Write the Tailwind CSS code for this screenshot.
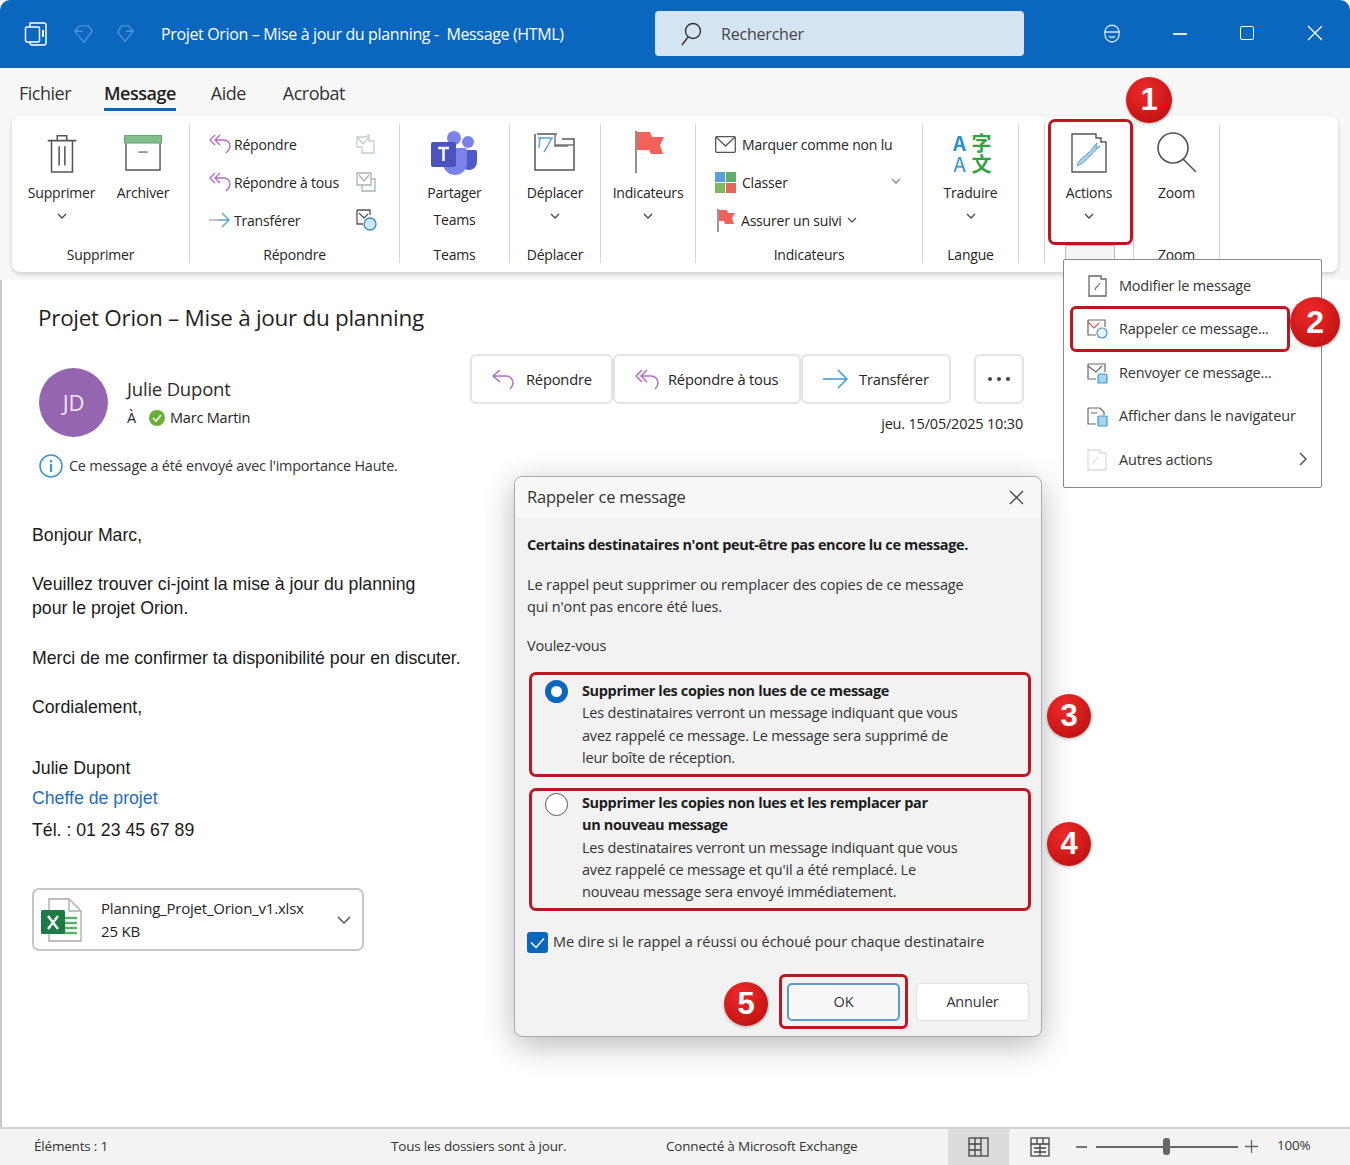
<!DOCTYPE html>
<html lang="fr">
<head>
<meta charset="UTF-8">
<title>Projet Orion – Mise à jour du planning - Message (HTML)</title>
<script src="https://cdn.jsdelivr.net/npm/@tailwindcss/browser@4"></script>
</head>
<body class="bg-white">
<div class="relative w-[1350px] h-[1165px] overflow-hidden flex flex-col font-['Open_Sans',sans-serif] text-[#242424] text-[14px] tracking-[-0.2px] bg-white">

  <!-- barre de titre -->
  <div class="h-[68px] shrink-0 bg-[#0a67bd] rounded-t-[10px] flex items-center text-white relative">
    <svg class="ml-[24px] w-[26px] h-[26px]" viewBox="0 0 26 26" fill="none" stroke="#fff" stroke-width="1.5"><rect x="1.5" y="6" width="14" height="15" rx="1.5"/><path d="M6 6V2h14a2 2 0 0 1 2 2v18a2 2 0 0 1-2 2H8a2 2 0 0 1-2-2v-1"/><path d="M19 9v7" stroke-width="2"/></svg>
    <svg class="ml-[24px] w-[20px] h-[20px]" viewBox="0 0 22 22" fill="none" stroke="#4e93d2" stroke-width="1.5"><path d="M1 8 6 2h10l4 6-9 12zM1 8h9"/></svg>
    <svg class="ml-[21px] w-[20px] h-[20px]" viewBox="0 0 22 22" fill="none" stroke="#4e93d2" stroke-width="1.5"><path d="M20 8 15 2H7L3 9l8 10zM20 8h-8"/></svg>
    <span class="ml-[26px] text-[16px] whitespace-pre tracking-[-0.35px]">Projet Orion – Mise à jour du planning -  Message (HTML)</span>
    <div class="absolute left-[655px] top-[11px] w-[369px] h-[45px] rounded-[4px] bg-[#d5e4f2] flex items-center text-[#444] text-[16px]">
      <svg class="ml-[25px] w-[22px] h-[24px]" viewBox="0 0 22 24" fill="none" stroke="#333" stroke-width="1.4"><circle cx="13" cy="9" r="7.5"/><path d="m8 15-6 8"/></svg>
      <span class="ml-[19px]">Rechercher</span>
    </div>
    <svg class="absolute left-[1103px] top-[24px] w-[18px] h-[20px]" viewBox="0 0 18 20" fill="none" stroke="#cfe2f5" stroke-width="1.3"><path d="M2 8c0-9 14-9 14 0v3c0 3-3 7-7 7s-7-4-7-7z"/><path d="M1 8h16M6 12c2 2 4 2 6 0"/></svg>
    <div class="absolute left-[1173px] top-[33px] w-[14px] h-[1.5px] bg-[#dbe9f6]"></div>
    <div class="absolute left-[1240px] top-[26px] w-[14px] h-[14px] border-[1.5px] border-white rounded-[2px]"></div>
    <svg class="absolute left-[1307px] top-[25px] w-[16px] h-[16px]" viewBox="0 0 16 16" stroke="#fff" stroke-width="1.4"><path d="m1 1 14 14M15 1 1 15"/></svg>
  </div>

  <!-- onglets -->
  <div class="h-[48px] shrink-0 bg-[#f8f8f8] flex items-start pt-[12px] pl-[19px] text-[18px] text-[#333] tracking-[-0.5px]">
    <span>Fichier</span>
    <span class="ml-[33px] h-[31px] border-b-[3px] border-[#0a67bd] font-semibold text-[#222]">Message</span>
    <span class="ml-[35px]">Aide</span>
    <span class="ml-[37px]">Acrobat</span>
  </div>

  <!-- ruban -->
  <div class="h-[164px] shrink-0 bg-[#f8f8f8] relative">
    <div class="absolute left-[12px] top-0 w-[1326px] h-[156px] bg-white rounded-[8px] shadow-[0_2px_5px_rgba(0,0,0,0.18)] flex pt-[8px] items-start">

      <!-- Supprimer -->
      <div class="w-[178px] h-[139px] border-r border-[#d4d4d4] flex flex-col">
        <div class="flex-1 flex">
          <div class="w-[99px] flex flex-col items-center">
            <svg class="mt-[9px] w-[32px] h-[40px]" viewBox="0 0 32 42" fill="none" stroke="#555" stroke-width="1.6"><path d="M1 8h30M11 8V3h10v5M5 8v33h22V8M13 14v20M19 14v20"/></svg>
            <span class="mt-[8px] leading-[24px]">Supprimer</span>
            <svg class="mt-[8px] w-[10px] h-[6px]" viewBox="0 0 10 6" fill="none" stroke="#444" stroke-width="1.3"><path d="m1 1 4 4 4-4"/></svg>
          </div>
          <div class="w-[64px] flex flex-col items-center">
            <svg class="mt-[11px] w-[40px] h-[36px]" viewBox="0 0 40 38" fill="none"><rect x="0.5" y="0.5" width="39" height="8" fill="#82bd8d" stroke="#6a9f76"/><path d="M2 9v28h36V9" stroke="#555" stroke-width="1.5"/><path d="M15 18h10" stroke="#777" stroke-width="1.5"/></svg>
            <span class="mt-[10px] leading-[24px]">Archiver</span>
          </div>
        </div>
        <div class="h-[16px] leading-[16px] text-center">Supprimer</div>
      </div>

      <!-- Répondre -->
      <div class="w-[210px] h-[139px] border-r border-[#d4d4d4] flex flex-col">
        <div class="flex-1 flex flex-col pl-[18px] pr-[22px] pt-[1px]">
          <div class="h-[38px] flex items-center">
            <svg class="w-[25px] h-[22px]" viewBox="0 0 25 22" fill="none" stroke="#b56cc4" stroke-width="1.4"><path d="M7 2 2 7l5 5M12 2 7 7l5 5M7 7h9a6 6 0 0 1 6 6c0 3-2 5-4 7"/></svg>
            <span class="ml-[1px] flex-1">Répondre</span>
            <svg class="w-[22px] h-[22px]" viewBox="0 0 22 22" fill="none" stroke="#c3cdd3" stroke-width="1.3"><path d="M2 4h9l3-2v6h5v12H7v-6H2z"/><path d="m2 4 6 7 6-7"/></svg>
          </div>
          <div class="h-[38px] flex items-center">
            <svg class="w-[25px] h-[22px]" viewBox="0 0 25 22" fill="none" stroke="#b56cc4" stroke-width="1.4"><path d="M7 2 2 7l5 5M12 2 7 7l5 5M7 7h9a6 6 0 0 1 6 6c0 3-2 5-4 7"/></svg>
            <span class="ml-[1px] flex-1">Répondre à tous</span>
            <svg class="w-[22px] h-[22px]" viewBox="0 0 22 22" fill="none" stroke="#a8b2b8" stroke-width="1.3"><path d="M2 2h14v12H2zM7 14v6h13V8h-4"/><path d="m4 4 5 6 5-6"/></svg>
          </div>
          <div class="h-[38px] flex items-center">
            <svg class="w-[25px] h-[22px]" viewBox="0 0 25 22" fill="none" stroke-width="1.4"><path d="M1 11h9" stroke="#c39ac5"/><path d="M10 11h11M14 4l7 7-7 7" stroke="#5aa3cf"/></svg>
            <span class="ml-[1px] flex-1">Transférer</span>
            <svg class="w-[22px] h-[22px]" viewBox="0 0 22 22" fill="none" stroke="#555" stroke-width="1.3"><path d="M2 1h13v5M2 1v14h6"/><path d="m4 4 5 5 4-4"/><circle cx="15" cy="15" r="6" fill="#cfe6f5" stroke="#3e8cc4"/></svg>
          </div>
        </div>
        <div class="h-[16px] leading-[16px] text-center">Répondre</div>
      </div>

      <!-- Teams -->
      <div class="w-[110px] h-[139px] border-r border-[#d4d4d4] flex flex-col items-center">
        <svg class="mt-[7px] w-[46px] h-[44px] -translate-x-[1px]" viewBox="0 0 46 44"><circle cx="37" cy="11" r="6" fill="#7b83eb"/><path d="M30 19h14a2 2 0 0 1 2 2v10a8 8 0 0 1-16 0z" fill="#5059c9"/><circle cx="23" cy="7" r="7" fill="#7b83eb"/><path d="M12 17h22a2 2 0 0 1 2 2v13a12 12 0 0 1-24 0z" fill="#7b83eb"/><rect x="0" y="11" width="25" height="25" rx="2" fill="#4b53bc"/><path d="M7 17h11M12.500 17v13" stroke="#fff" stroke-width="2.500"/></svg>
        <span class="mt-[6px] leading-[24px]">Partager</span>
        <span class="mt-[3px] leading-[24px]">Teams</span>
        <span class="mt-auto h-[16px] leading-[16px]">Teams</span>
      </div>

      <!-- Déplacer -->
      <div class="w-[91px] h-[139px] border-r border-[#d4d4d4] flex flex-col items-center">
        <svg class="mt-[8px] w-[42px] h-[40px]" viewBox="0 0 42 40" fill="none" stroke="#555" stroke-width="1.5"><path d="M3 2h20M28 7h12v31H1V2"/><path d="M4 6h14l-8 14M6 6l-1 10" stroke="#5aa3cf"/><path d="M21 2v11h19M20 14h14" stroke="#777"/></svg>
        <span class="mt-[9px] leading-[24px]">Déplacer</span>
        <svg class="mt-[8px] w-[10px] h-[6px]" viewBox="0 0 10 6" fill="none" stroke="#444" stroke-width="1.3"><path d="m1 1 4 4 4-4"/></svg>
        <span class="mt-auto h-[16px] leading-[16px]">Déplacer</span>
      </div>

      <!-- Indicateurs gros bouton -->
      <div class="w-[95px] h-[139px] border-r border-[#d4d4d4] flex flex-col items-center">
        <svg class="mt-[7px] w-[30px] h-[42px] translate-x-[2px]" viewBox="0 0 30 42"><path d="M1 0v42" stroke="#555" stroke-width="1.3"/><path d="M2 1h13l2 5h12l-4 8 3 9H16l-2-4H2z" fill="#f0625a"/></svg>
        <span class="mt-[8px] leading-[24px]">Indicateurs</span>
        <svg class="mt-[8px] w-[10px] h-[6px]" viewBox="0 0 10 6" fill="none" stroke="#444" stroke-width="1.3"><path d="m1 1 4 4 4-4"/></svg>
      </div>

      <!-- Indicateurs -->
      <div class="w-[227px] h-[139px] border-r border-[#d4d4d4] flex flex-col">
        <div class="flex-1 flex flex-col pl-[19px] pt-[1px]">
          <div class="h-[38px] flex items-center">
            <svg class="w-[21px] h-[17px]" viewBox="0 0 21 17" fill="none" stroke="#555" stroke-width="1.3"><rect x="0.7" y="0.7" width="19.6" height="15.6" rx="1"/><path d="m1 1 9.500 9L20 1"/></svg>
            <span class="ml-[6px]">Marquer comme non lu</span>
          </div>
          <div class="h-[38px] flex items-center">
            <svg class="w-[21px] h-[21px]" viewBox="0 0 21 21"><rect width="10" height="10" fill="#5a9fd8"/><rect x="11" width="10" height="10" fill="#5fae6a"/><rect y="11" width="10" height="10" fill="#7db85e"/><rect x="11" y="11" width="10" height="10" fill="#e2685a"/></svg>
            <span class="ml-[6px] flex-1">Classer</span>
            <svg class="mr-[21px] mb-[3px] w-[10px] h-[6px]" viewBox="0 0 10 6" fill="none" stroke="#888" stroke-width="1.3"><path d="m1 1 4 4 4-4"/></svg>
          </div>
          <div class="h-[38px] flex items-center">
            <svg class="ml-[2px] w-[19px] h-[23px]" viewBox="0 0 19 23"><path d="M1 0v23" stroke="#555" stroke-width="1.2"/><path d="M2 1h8l1 3h7l-3 5 2 6H8l-1-3H2z" fill="#f0625a"/></svg>
            <span class="ml-[5px]">Assurer un suivi</span>
            <svg class="ml-[5px] w-[10px] h-[6px]" viewBox="0 0 10 6" fill="none" stroke="#555" stroke-width="1.3"><path d="m1 1 4 4 4-4"/></svg>
          </div>
        </div>
        <div class="h-[16px] leading-[16px] text-center">Indicateurs</div>
      </div>

      <!-- Langue -->
      <div class="w-[96px] h-[139px] border-r border-[#d4d4d4] flex flex-col items-center">
        <div class="mt-[8px] w-[44px] h-[42px] grid grid-cols-2 grid-rows-2 text-[20px] leading-[21px] font-bold text-center tracking-normal font-['Noto_Sans_CJK_SC',sans-serif]">
          <span class="text-[#2d8fd0]">A</span><span class="text-[#33a145]">字</span><span class="text-[#2d8fd0] font-normal">A</span><span class="text-[#33a145]">文</span>
        </div>
        <span class="mt-[7px] leading-[24px]">Traduire</span>
        <svg class="mt-[8px] w-[10px] h-[6px]" viewBox="0 0 10 6" fill="none" stroke="#444" stroke-width="1.3"><path d="m1 1 4 4 4-4"/></svg>
        <span class="mt-auto h-[16px] leading-[16px]">Langue</span>
      </div>

      <div class="w-[26px] h-[139px] border-r border-[#d4d4d4]"></div>

      <!-- Actions (encadré rouge) -->
      <div class="w-[89px] h-[139px] border-r border-[#d4d4d4] flex flex-col items-center">
        <svg class="mt-[9px] w-[36px] h-[40px]" viewBox="0 0 36 40" fill="none"><path d="M1 1h24v4h5v4h5v30H1z" stroke="#555" stroke-width="1.4"/><path d="M6 33c2-7 6-8 10-12 3-3 5-4 7-8l3-3-1 5 4-2c-3 4-7 6-10 10-3 3-6 7-13 10z" fill="#a9cfea" stroke="#4b93c9" stroke-width="0.8"/></svg>
        <span class="mt-[8px] leading-[24px]">Actions</span>
        <svg class="mt-[8px] w-[10px] h-[6px]" viewBox="0 0 10 6" fill="none" stroke="#444" stroke-width="1.3"><path d="m1 1 4 4 4-4"/></svg>
      </div>

      <!-- Zoom -->
      <div class="w-[86px] h-[139px] border-r border-[#d4d4d4] flex flex-col items-center">
        <svg class="mt-[7px] w-[42px] h-[42px]" viewBox="0 0 42 42" fill="none" stroke="#555" stroke-width="1.6"><circle cx="17" cy="17" r="15"/><path d="m27 28 13 13"/></svg>
        <span class="mt-[8px] leading-[24px]">Zoom</span>
        <span class="mt-auto h-[16px] leading-[16px]">Zoom</span>
      </div>
    </div>
  </div>

  <!-- message -->
  <main class="flex-1 relative border-l-2 border-[#c8c8c8] bg-white min-h-0">
    <h1 class="ml-[36px] mt-[22px] text-[22.5px] leading-[32px] font-normal text-[#1f1f1f] tracking-[-0.3px]">Projet Orion – Mise à jour du planning</h1>

    <div class="flex justify-between items-start mt-[34px] pr-[326px] pl-[37px]">
      <div>
        <div class="flex items-center">
          <div class="w-[69px] h-[69px] rounded-full bg-[#9565b1] flex items-center justify-center text-[#f1e6f5] text-[22px]">JD</div>
          <div class="ml-[19px] -mt-[1px]">
            <div class="text-[18.5px] leading-[26px] text-[#2b2b2b]">Julie Dupont</div>
            <div class="mt-[6px] flex items-center text-[14.5px] leading-[20px]">
              <span>À</span>
              <svg class="ml-[13px] w-[16px] h-[16px]" viewBox="0 0 16 16" fill="none"><circle cx="8" cy="8" r="8" fill="#6bae33"/><path d="m4 8 3 3 5-6" stroke="#fff" stroke-width="1.6"/></svg>
              <span class="ml-[5px]">Marc Martin</span>
            </div>
          </div>
        </div>
      </div>
      <div class="flex flex-col items-end -mt-[14px]">
        <div class="flex items-center">
          <div class="flex">
            <div class="w-[143px] h-[50px] rounded-[6px] border-2 border-[#e4e4e4] flex items-center pl-[19px] text-[14.7px]">
              <svg class="w-[24px] h-[24px]" viewBox="0 0 24 24" fill="none" stroke="#b56cc4" stroke-width="1.5"><path d="M9 3 2 9l7 6M2 9h13a7 7 0 0 1 7 7c0 3-2 5-3 6"/></svg>
              <span class="ml-[11px]">Répondre</span>
            </div>
            <div class="w-[188px] h-[50px] rounded-[6px] border-2 border-[#e4e4e4] flex items-center pl-[19px] text-[14.7px]">
              <svg class="w-[27px] h-[24px]" viewBox="0 0 27 24" fill="none" stroke="#b56cc4" stroke-width="1.5"><path d="M8 3 2 9l6 6M13 3 7 9l6 6M7 9h10a7 7 0 0 1 7 7c0 3-2 5-3 6"/></svg>
              <span class="ml-[7px]">Répondre à tous</span>
            </div>
            <div class="w-[150px] h-[50px] rounded-[6px] border-2 border-[#e4e4e4] flex items-center pl-[19px] text-[14.7px]">
              <svg class="w-[26px] h-[24px]" viewBox="0 0 26 24" fill="none" stroke="#3f97d1" stroke-width="1.5"><path d="M1 12h24M16 3l9 9-9 9"/></svg>
              <span class="ml-[11px]">Transférer</span>
            </div>
          </div>
          <div class="ml-[23px] w-[50px] h-[50px] rounded-[6px] border-2 border-[#e4e4e4] flex items-center justify-center gap-[5px]">
            <span class="w-[4px] h-[4px] rounded-full bg-[#444]"></span><span class="w-[4px] h-[4px] rounded-full bg-[#444]"></span><span class="w-[4px] h-[4px] rounded-full bg-[#444]"></span>
          </div>
        </div>
        <div class="mt-[10px] pr-[1px] text-[14.5px] leading-[20px]">jeu. 15/05/2025 10:30</div>
      </div>
    </div>

    <div class="ml-[37px] mt-[17px] flex items-center text-[#333]">
      <svg class="w-[24px] h-[24px]" viewBox="0 0 24 24" fill="none" stroke="#3f97d1" stroke-width="1.6"><circle cx="12" cy="12" r="11"/><path d="M12 10v8M12 6v2.500" stroke-width="2.200"/></svg>
      <span class="ml-[6px] text-[14.4px]">Ce message a été envoyé avec l'importance Haute.</span>
    </div>

    <div class="ml-[30px] mt-[45px] font-['Liberation_Sans',sans-serif] text-[17.7px] leading-[24.5px] text-[#1a1a1a] tracking-normal">
      <p>Bonjour Marc,</p>
      <p class="mt-[24px]">Veuillez trouver ci-joint la mise à jour du planning<br>pour le projet Orion.</p>
      <p class="mt-[25px]">Merci de me confirmer ta disponibilité pour en discuter.</p>
      <p class="mt-[25px]">Cordialement,</p>
      <p class="mt-[36px]">Julie Dupont</p>
      <p class="mt-[6px] text-[#1f6fb8]">Cheffe de projet</p>
      <p class="mt-[7px]">Tél. : 01 23 45 67 89</p>
    </div>

    <div class="ml-[30px] mt-[46px] w-[332px] h-[63px] rounded-[7px] border-2 border-[#c6c6c6] flex items-center">
      <svg class="ml-[6px] w-[44px] h-[44px]" viewBox="0 0 44 44" fill="none"><path d="M9 1h20l12 12v30H9z" fill="#fff" stroke="#aaa" stroke-width="1.300"/><path d="M29 1v12h12" stroke="#aaa" stroke-width="1.300"/><path d="M24 20h13M24 25h13M24 30h13M24 35h13" stroke="#5fae6a" stroke-width="2.500"/><rect x="1" y="12" width="24" height="24" rx="1.500" fill="#1d7a45"/><path d="m8 18 10 13M18 18 8 31" stroke="#fff" stroke-width="2.400"/></svg>
      <div class="ml-[17px] flex-1 text-[15px] leading-[23px]">
        <div>Planning_Projet_Orion_v1.xlsx</div>
        <div>25 KB</div>
      </div>
      <svg class="mr-[11px] w-[14px] h-[8px]" viewBox="0 0 14 8" fill="none" stroke="#555" stroke-width="1.500"><path d="m1 1 6 6 6-6"/></svg>
    </div>
  </main>

  <!-- barre d'état -->
  <footer class="h-[38px] shrink-0 bg-[#f3f3f3] border-t-2 border-[#d2d2d2] flex items-center pb-[2px] text-[13.5px] text-[#333] relative">
    <span class="ml-[34px] w-[357px]">Éléments : 1</span>
    <span class="w-[275px]">Tous les dossiers sont à jour.</span>
    <span>Connecté à Microsoft Exchange</span>
    <div class="absolute left-[948px] top-0 h-[36px] w-[61px] bg-[#dcdcdc] flex items-center justify-center">
      <svg class="w-[21px] h-[20px]" viewBox="0 0 21 20" fill="none" stroke="#444" stroke-width="1.300"><rect x="1" y="1" width="19" height="18"/><path d="M7 1v18M13 1v18M1 7h12M1 13h12"/></svg>
    </div>
    <svg class="absolute left-[1030px] top-[8px] w-[20px] h-[20px]" viewBox="0 0 20 20" fill="none" stroke="#444" stroke-width="1.300"><rect x="1" y="1" width="18" height="18"/><path d="M7 1v6M13 1v6M1 7h18M10 7v12M4 11h12M4 15h12"/></svg>
    <div class="absolute left-[1076px] top-[17px] w-[11px] h-[1.500px] bg-[#777]"></div>
    <div class="absolute left-[1096px] top-[17px] w-[142px] h-[1.500px] bg-[#666]"></div>
    <div class="absolute left-[1163px] top-[9px] w-[7px] h-[17px] rounded-[3px] bg-[#666]"></div>
    <svg class="absolute left-[1245px] top-[11px] w-[13px] h-[13px]" viewBox="0 0 13 13" stroke="#666" stroke-width="1.300"><path d="M0 6.500h13M6.500 0v13"/></svg>
    <span class="absolute left-[1277px] top-[6px]">100%</span>
  </footer>

  <!-- encadré Actions -->
  <div class="absolute left-[1048px] top-[119px] w-[85px] h-[126px] border-[3px] border-[#bd1620] rounded-[7px]"></div>
  <div class="absolute left-[1065px] top-[245px] w-[50px] h-[15px] bg-[#f4f4f4] border border-[#bbb]"></div>

  <!-- menu Actions -->
  <div class="absolute left-[1063px] top-[259px] w-[259px] h-[229px] bg-white border-[1.500px] border-[#8a8a8a] rounded-[2px] text-[14.500px] text-[#333]">
    <div class="absolute left-[24px] top-[13px] h-[26px] flex items-center">
      <svg class="w-[19px] h-[22px]" viewBox="0 0 19 22" fill="none" stroke="#666" stroke-width="1.300"><path d="M1 1h12v3h5v17H1z"/><path d="M7 15c1-4 3-3 5-7" stroke="#777"/></svg>
      <span class="ml-[12px]">Modifier le message</span>
    </div>
    <div class="absolute left-[6px] top-[46px] w-[220px] h-[46px] border-[3px] border-[#bd1620] rounded-[6px] flex items-center pl-[14px]">
      <svg class="w-[22px] h-[20px]" viewBox="0 0 22 20" fill="none" stroke="#666" stroke-width="1.200"><path d="M1 1h17v7M1 1v15h8"/><path d="m1 3 6 6 5-5" stroke="#c95a5a"/><circle cx="15" cy="14" r="5" fill="#e9f3fa" stroke="#4b93c9"/></svg>
      <span class="ml-[10px]">Rappeler ce message...</span>
    </div>
    <div class="absolute left-[23px] top-[100px] h-[26px] flex items-center">
      <svg class="w-[21px] h-[21px]" viewBox="0 0 21 21" fill="none" stroke="#666" stroke-width="1.200"><path d="M1 1h17v8M1 1v15h8"/><path d="m1 3 8 6 6-6"/><rect x="11" y="11" width="9" height="9" rx="2" fill="#a9d3ef" stroke="#3f97d1"/></svg>
      <span class="ml-[11px]">Renvoyer ce message...</span>
    </div>
    <div class="absolute left-[23px] top-[143px] h-[26px] flex items-center">
      <svg class="w-[21px] h-[22px]" viewBox="0 0 21 22" fill="none" stroke="#666" stroke-width="1.200"><path d="M1 3h12l4 4v3M1 3v16h8M4 8h6"/><rect x="11" y="11" width="9" height="10" rx="1" fill="#a9d3ef" stroke="#3f97d1"/></svg>
      <span class="ml-[11px] tracking-[-0.13px]">Afficher dans le navigateur</span>
    </div>
    <div class="absolute left-[23px] top-[187px] h-[26px] flex items-center">
      <svg class="w-[20px] h-[22px]" viewBox="0 0 20 22" fill="none" stroke="#ddd" stroke-width="1.300"><path d="M1 1h12v3h6v17H1z"/><path d="M6 15c1-4 3-3 5-7"/></svg>
      <span class="ml-[12px]">Autres actions</span>
    </div>
    <svg class="absolute left-[235px] top-[192px] w-[9px] h-[14px]" viewBox="0 0 9 14" fill="none" stroke="#555" stroke-width="1.500"><path d="m1 1 6 6-6 6"/></svg>
  </div>

  <!-- dialogue -->
  <div class="absolute left-[514px] top-[476px] w-[528px] h-[561px] bg-[#f2f2f2] border-[1.500px] border-[#a9a9a9] rounded-[8px] shadow-[0_8px_32px_rgba(0,0,0,0.28)] text-[14.500px] text-[#333]">
    <div class="h-[40px] rounded-t-[8px] bg-[#f8f8f8] flex items-center pl-[12px] text-[16.500px] relative">
      <span>Rappeler ce message</span>
      <svg class="absolute left-[494px] top-[13px] w-[15px] h-[15px]" viewBox="0 0 15 15" stroke="#444" stroke-width="1.300"><path d="m1 1 13 13M14 1 1 14"/></svg>
    </div>
    <div class="px-[12px]">
      <p class="mt-[17px] leading-[22px] font-bold text-[#1c1c1c] tracking-[-0.37px]">Certains destinataires n'ont peut-être pas encore lu ce message.</p>
      <p class="mt-[18px] leading-[22px] tracking-[-0.12px]">Le rappel peut supprimer ou remplacer des copies de ce message<br>qui n'ont pas encore été lues.</p>
      <p class="mt-[17px] leading-[22px]">Voulez-vous</p>
    </div>
    <div class="ml-[14px] mt-[15px] w-[502px] h-[105px] border-[3px] border-[#bd1620] rounded-[7px] flex pt-[5px] pl-[13px] leading-[22.300px]">
      <div class="mt-[0px] w-[23px] h-[23px] shrink-0 rounded-full border-[6.500px] border-[#0a67bd] bg-white"></div>
      <div class="ml-[14px]">
        <div class="font-bold text-[#1c1c1c] tracking-[-0.37px]">Supprimer les copies non lues de ce message</div>
        Les destinataires verront un message indiquant que vous<br>avez rappelé ce message. Le message sera supprimé de<br>leur boîte de réception.
      </div>
    </div>
    <div class="ml-[14px] mt-[11px] w-[502px] h-[123px] border-[3px] border-[#bd1620] rounded-[7px] flex pt-[1px] pl-[13px] leading-[22.300px]">
      <div class="mt-[1px] w-[23px] h-[23px] shrink-0 rounded-full border-[1.500px] border-[#555] bg-white"></div>
      <div class="ml-[14px]">
        <div class="font-bold text-[#1c1c1c] tracking-[-0.37px]">Supprimer les copies non lues et les remplacer par<br>un nouveau message</div>
        Les destinataires verront un message indiquant que vous<br>avez rappelé ce message et qu'il a été remplacé. Le<br>nouveau message sera envoyé immédiatement.
      </div>
    </div>
    <div class="ml-[12px] mt-[20px] flex items-center h-[22px]">
      <svg class="w-[21px] h-[21px]" viewBox="0 0 21 21"><rect width="21" height="21" rx="3" fill="#0a67bd"/><path d="m4 10.500 5 5 8-9" fill="none" stroke="#fff" stroke-width="1.500"/></svg>
      <span class="ml-[5px] tracking-[-0.04px]">Me dire si le rappel a réussi ou échoué pour chaque destinataire</span>
    </div>
    <div class="flex justify-end mt-[21px] pr-[12px] items-center">
      <div class="w-[129px] h-[55px] border-[3px] border-[#bd1620] rounded-[6px] flex items-center justify-center">
        <div class="w-[113px] h-[38px] bg-[#f8f8f8] border-2 border-[#5c9bcb] rounded-[5px] flex items-center justify-center">OK</div>
      </div>
      <div class="ml-[8px] w-[113px] h-[38px] bg-white border border-[#e0e0e0] rounded-[4px] flex items-center justify-center">Annuler</div>
    </div>
  </div>

  <!-- pastilles -->
  <div class="absolute left-[1126px] top-[77px] w-[46px] h-[46px] rounded-full bg-[radial-gradient(circle_at_40%_30%,#ee2a2a,#b60c0c)] shadow-[0_1px_3px_rgba(0,0,0,0.3)] flex items-center justify-center text-white text-[31px] font-bold font-['Liberation_Sans',sans-serif]">1</div>
  <div class="absolute left-[1290px] top-[297px] w-[50px] h-[50px] rounded-full bg-[radial-gradient(circle_at_40%_30%,#ee2a2a,#b60c0c)] shadow-[0_1px_3px_rgba(0,0,0,0.3)] flex items-center justify-center text-white text-[32px] font-bold font-['Liberation_Sans',sans-serif]">2</div>
  <div class="absolute left-[1047px] top-[694px] w-[44px] h-[44px] rounded-full bg-[radial-gradient(circle_at_40%_30%,#ee2a2a,#b60c0c)] shadow-[0_1px_3px_rgba(0,0,0,0.3)] flex items-center justify-center text-white text-[31px] font-bold font-['Liberation_Sans',sans-serif]">3</div>
  <div class="absolute left-[1047px] top-[822px] w-[44px] h-[44px] rounded-full bg-[radial-gradient(circle_at_40%_30%,#ee2a2a,#b60c0c)] shadow-[0_1px_3px_rgba(0,0,0,0.3)] flex items-center justify-center text-white text-[31px] font-bold font-['Liberation_Sans',sans-serif]">4</div>
  <div class="absolute left-[724px] top-[982px] w-[44px] h-[44px] rounded-full bg-[radial-gradient(circle_at_40%_30%,#ee2a2a,#b60c0c)] shadow-[0_1px_3px_rgba(0,0,0,0.3)] flex items-center justify-center text-white text-[31px] font-bold font-['Liberation_Sans',sans-serif]">5</div>
</div>
</body>
</html>
